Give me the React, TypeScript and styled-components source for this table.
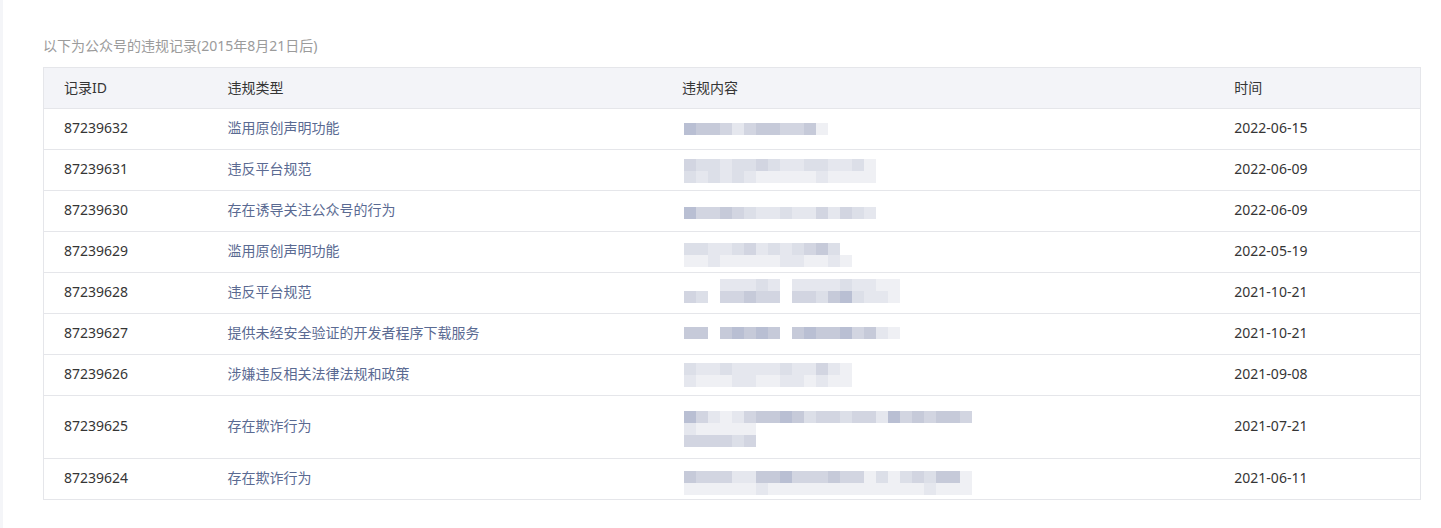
import React from "react";
import styled, { createGlobalStyle } from "styled-components";

const GlobalStyle = createGlobalStyle`
  html, body {
    margin: 0;
    padding: 0;
    background: #ffffff;
  }
  body {
    font-family: "Noto Sans", "Noto Sans CJK SC", sans-serif;
    font-size: 14px;
    color: #353535;
  }
`;

const Page = styled.div`
  min-height: 528px;
  box-sizing: border-box;
  border-left: 3px solid #f4f5f8;
  padding: 36px 20px 0 40px;
`;

const Title = styled.div`
  font-size: 14px;
  line-height: 20px;
  color: #9b9b9b;
  margin-bottom: 11px;
`;

const Table = styled.table`
  width: 1378px;
  border-collapse: collapse;
  table-layout: fixed;
  border: 1px solid #e5e6ea;
`;

const HeadRow = styled.tr`
  height: 41px;
  background: #f3f4f8;
  border-bottom: 1px solid #e5e6ea;
`;

const Th = styled.th`
  padding: 0 20px 1px;
  text-align: left;
  font-weight: normal;
  font-size: 14px;
  line-height: 20px;
  color: #353535;
  vertical-align: middle;
`;

const Row = styled.tr<{ $tall?: boolean }>`
  height: ${(p) => (p.$tall ? "62px" : "40px")};
  border-bottom: 1px solid #e5e6ea;
`;

const Td = styled.td<{ $tone?: "id" | "type" | "time" }>`
  padding: 0 20px 3px;
  vertical-align: middle;
  font-size: 14px;
  line-height: 20px;
  color: ${(p) => (p.$tone === "type" ? "#5a6a92" : "#353535")};
  white-space: nowrap;
`;

const MosaicCell = styled.td`
  padding: 0 20px 0 22px;
  vertical-align: top;
`;

const MosaicSvg = styled.svg`
  display: block;
`;

const SHADES: Record<string, string> = {
  "1": "#b9bfd3",
  "2": "#c6cad9",
  "3": "#d2d5e1",
  "4": "#dcdfe8",
  "5": "#e5e7ee",
  "6": "#eff0f4",
};

type Line = { y: number; s: string };

const Mosaic: React.FC<{ lines: Line[]; height: number }> = ({ lines, height }) => {
  const width = Math.max(...lines.map((l) => l.s.length)) * 12;
  return (
    <MosaicSvg width={width} height={height} viewBox={`0 0 ${width} ${height}`}>
      {lines.map((l, li) =>
        l.s.split("").map((c, i) =>
          SHADES[c] ? (
            <rect key={`${li}-${i}`} x={i * 12} y={l.y} width={12} height={12} fill={SHADES[c]} />
          ) : null
        )
      )}
    </MosaicSvg>
  );
};

type Record_ = { id: string; type: string; time: string; lines: Line[]; tall?: boolean };

const records: Record_[] = [
  { id: "87239632", type: "滥用原创声明功能", time: "2022-06-15", lines: [{ y: 14, s: "122353223326" }] },
  {
    id: "87239631",
    type: "违反平台规范",
    time: "2022-06-09",
    lines: [
      { y: 9, s: "3445443455445546" },
      { y: 21, s: "4545456666656666" },
    ],
  },
  { id: "87239630", type: "存在诱导关注公众号的行为", time: "2022-06-09", lines: [{ y: 16, s: "1332345545535345" }] },
  {
    id: "87239629",
    type: "滥用原创声明功能",
    time: "2022-05-19",
    lines: [
      { y: 11, s: "4455435454324" },
      { y: 23, s: "66566666556656" },
    ],
  },
  {
    id: "87239628",
    type: "违反平台规范",
    time: "2021-10-21",
    lines: [
      { y: 6, s: "...55545.555545566" },
      { y: 18, s: "34.33233.334214556" },
    ],
  },
  { id: "87239627", type: "提供未经安全验证的开发者程序下载服务", time: "2021-10-21", lines: [{ y: 13, s: "22.21212.212213256" }] },
  {
    id: "87239626",
    type: "涉嫌违反相关法律法规和政策",
    time: "2021-09-08",
    lines: [
      { y: 8, s: "45545555455356" },
      { y: 20, s: "56665566556566" },
    ],
  },
  {
    id: "87239625",
    type: "存在欺诈行为",
    time: "2021-07-21",
    tall: true,
    lines: [
      { y: 15, s: "135653221243343351323223" },
      { y: 27, s: "566666" },
      { y: 39, s: "333343" },
    ],
  },
  {
    id: "87239624",
    type: "存在欺诈行为",
    time: "2021-06-11",
    lines: [
      { y: 12, s: "233355221333233646434226" },
      { y: 24, s: "666666566666666666665666" },
    ],
  },
];

export default function App() {
  return (
    <>
      <GlobalStyle />
      <Page>
        <Title>以下为公众号的违规记录(2015年8月21日后)</Title>
        <Table>
          <colgroup>
            <col style={{ width: 164 }} />
            <col style={{ width: 454 }} />
            <col style={{ width: 552 }} />
            <col style={{ width: 206 }} />
          </colgroup>
          <thead>
            <HeadRow>
              <Th>记录ID</Th>
              <Th>违规类型</Th>
              <Th>违规内容</Th>
              <Th>时间</Th>
            </HeadRow>
          </thead>
          <tbody>
            {records.map((r) => (
              <Row key={r.id} $tall={r.tall}>
                <Td $tone="id">{r.id}</Td>
                <Td $tone="type">{r.type}</Td>
                <MosaicCell>
                  <Mosaic lines={r.lines} height={r.tall ? 62 : 40} />
                </MosaicCell>
                <Td $tone="time">{r.time}</Td>
              </Row>
            ))}
          </tbody>
        </Table>
      </Page>
    </>
  );
}
